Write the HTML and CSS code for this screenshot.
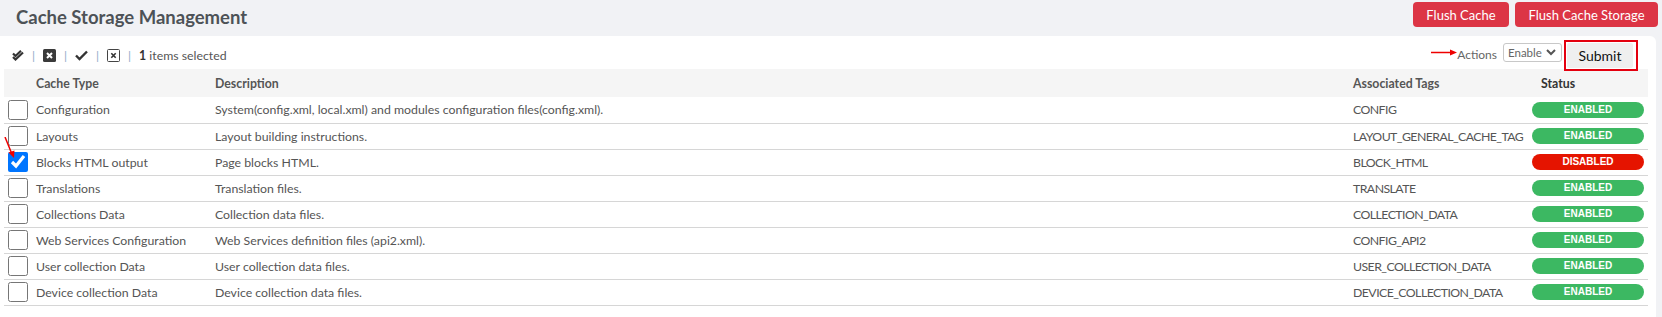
FILE: index.html
```html
<!DOCTYPE html>
<html>
<head>
<meta charset="utf-8">
<link rel="stylesheet" href="styles.css">
</head>
<body>
<div class="page-head">
  <h1 class="title">Cache Storage Management</h1>
  <div class="head-actions">
    <button class="btn-danger">Flush Cache</button>
    <button class="btn-danger">Flush Cache Storage</button>
  </div>
</div>
<div class="card">
  <div class="toolbar">
    <div class="mass">
      <svg class="ic ic-dbl" width="12" height="11" viewBox="0 0 12 11"><path d="M1 3.5 L3.5 6 L9 0.8" fill="none" stroke="#333" stroke-width="2.2"/><path d="M1 7 L3.5 9.5 L11 2.5" fill="none" stroke="#333" stroke-width="2.2"/></svg>
      <span class="sep">|</span>
      <svg class="ic" width="13" height="13" viewBox="0 0 13 13"><rect x="0" y="0" width="13" height="13" rx="1.5" fill="#3a3a3a"/><path d="M4 4 L9 9 M9 4 L4 9" stroke="#fff" stroke-width="2"/></svg>
      <span class="sep">|</span>
      <svg class="ic" width="13" height="11" viewBox="0 0 13 11"><path d="M1 5.5 L4.5 9 L12 1.5" fill="none" stroke="#333" stroke-width="2.4"/></svg>
      <span class="sep">|</span>
      <svg class="ic" width="13" height="13" viewBox="0 0 13 13"><rect x="0.5" y="0.5" width="12" height="12" rx="1" fill="#fff" stroke="#444"/><path d="M4.3 4.3 L8.7 8.7 M8.7 4.3 L4.3 8.7" stroke="#333" stroke-width="1.6"/></svg>
      <span class="sep">|</span>
      <span class="sel-count"><b>1</b> items selected</span>
    </div>
    <div class="act">
      <svg class="arrow-r" width="26" height="7" viewBox="0 0 26 7"><path d="M0 3.5 H21" stroke="#e00" stroke-width="1.5"/><path d="M19 0.5 L26 3.5 L19 6.5 Z" fill="#e00"/></svg>
      <span class="act-label">Actions</span>
      <div class="fake-select"><span>Enable</span><svg width="10" height="7" viewBox="0 0 10 7"><path d="M1 1 L5 5 L9 1" fill="none" stroke="#555" stroke-width="2"/></svg></div>
      <div class="mark"><button class="btn-submit">Submit</button></div>
    </div>
  </div>
  <table class="grid">
    <colgroup>
      <col class="c-check"><col class="c-type"><col class="c-desc"><col class="c-tags"><col class="c-status">
    </colgroup>
    <thead>
      <tr><th></th><th>Cache Type</th><th>Description</th><th>Associated Tags</th><th class="th-status">Status</th></tr>
    </thead>
    <tbody>
      <tr><td class="cb"><input type="checkbox"></td><td>Configuration</td><td>System(config.xml, local.xml) and modules configuration files(config.xml).</td><td class="tag">CONFIG</td><td><span class="badge on">ENABLED</span></td></tr>
      <tr><td class="cb"><input type="checkbox"></td><td>Layouts</td><td>Layout building instructions.</td><td class="tag">LAYOUT_GENERAL_CACHE_TAG</td><td><span class="badge on">ENABLED</span></td></tr>
      <tr><td class="cb"><div class="cb-wrap"><svg class="arrow-d" width="12" height="22" viewBox="0 0 12 22"><path d="M1 0 L7.5 16" stroke="#e00" stroke-width="1.5"/><path d="M4.5 15.5 L10 21 L10.5 13.5 Z" fill="#e00"/></svg><input type="checkbox" checked></div></td><td>Blocks HTML output</td><td>Page blocks HTML.</td><td class="tag">BLOCK_HTML</td><td><span class="badge off">DISABLED</span></td></tr>
      <tr><td class="cb"><input type="checkbox"></td><td>Translations</td><td>Translation files.</td><td class="tag">TRANSLATE</td><td><span class="badge on">ENABLED</span></td></tr>
      <tr><td class="cb"><input type="checkbox"></td><td>Collections Data</td><td>Collection data files.</td><td class="tag">COLLECTION_DATA</td><td><span class="badge on">ENABLED</span></td></tr>
      <tr><td class="cb"><input type="checkbox"></td><td>Web Services Configuration</td><td>Web Services definition files (api2.xml).</td><td class="tag">CONFIG_API2</td><td><span class="badge on">ENABLED</span></td></tr>
      <tr><td class="cb"><input type="checkbox"></td><td>User collection Data</td><td>User collection data files.</td><td class="tag">USER_COLLECTION_DATA</td><td><span class="badge on">ENABLED</span></td></tr>
      <tr><td class="cb"><input type="checkbox"></td><td>Device collection Data</td><td>Device collection data files.</td><td class="tag">DEVICE_COLLECTION_DATA</td><td><span class="badge on">ENABLED</span></td></tr>
    </tbody>
  </table>
</div>
</body>
</html>
```
FILE: styles.css
```css
* { box-sizing: border-box; }
html, body { margin: 0; padding: 0; }
body {
  background: #f1f2f5;
  font-family: Lato, "Liberation Sans", sans-serif;
  color: #555;
  font-size: 12.3px;
}
.page-head {
  height: 36px;
  display: flex;
  justify-content: space-between;
  align-items: flex-start;
  padding: 0 4px 0 16px;
}
.title {
  margin: 0;
  font-size: 18.5px;
  font-weight: 700;
  color: #4d5257;
  line-height: 34px;
}
.head-actions { display: flex; gap: 6px; padding-top: 2px; }
.btn-danger {
  background: #dc3545;
  color: #fff;
  border: 0;
  border-radius: 4px;
  font-family: Lato, "Liberation Sans", sans-serif;
  font-size: 13px;
  height: 25px;
  padding: 0 13.5px;
}
.card {
  background: #fff;
  margin-right: 6px;
  border-radius: 0 6px 0 0;
  padding: 0 8px 20px 4px;
}
.toolbar {
  height: 33px;
  display: flex;
  justify-content: space-between;
  align-items: flex-start;
}
.mass {
  display: flex;
  align-items: center;
  padding: 12px 0 0 8px;
  height: 27px;
}
.ic { display: block; }
.sep { color: #8fa8c8; margin: 0 8px; font-size: 12px; }
.sel-count { color: #555; font-size: 12.3px; }
.sel-count b { color: #333; }
.act { display: flex; align-items: flex-start; padding-top: 4px; margin-right: 10px; }
.arrow-r { margin-top: 9px; }
.act-label { margin-top: 7px; margin-right: 6px; color: #666; font-size: 12px; }
.fake-select {
  margin-top: 3px;
  width: 59px;
  height: 19px;
  border: 1px solid #c8c8c8;
  border-radius: 3px;
  display: flex;
  align-items: center;
  justify-content: space-between;
  padding: 0 5px 0 4px;
  color: #666;
  font-size: 11.5px;
  margin-right: 2px;
}
.mark { border: 2px solid #e4000f; padding: 1px; width: 74px; height: 31px; }
.btn-submit {
  display: block;
  width: 66px;
  height: 25px;
  background: #efefef;
  border: 0;
  border-radius: 2px;
  font-family: Lato, "Liberation Sans", sans-serif;
  font-size: 14px;
  color: #111;
  padding: 0;
}
.grid {
  width: 1644px;
  border-collapse: collapse;
  table-layout: fixed;
}
.c-check { width: 28px; }
.c-type { width: 179px; }
.c-desc { width: 1138px; }
.c-tags { width: 179px; }
.c-status { width: 120px; }
.grid th {
  background: #f5f5f5;
  height: 28px;
  text-align: left;
  font-weight: 700;
  color: #555;
  padding: 0 4px;
  font-size: 12.3px;
}
.grid th.th-status { padding-left: 13px; color: #333; }
.grid td {
  height: 26px;
  border-bottom: 1px solid #d6d6d6;
  padding: 0 4px;
  white-space: nowrap;
}
.grid td.tag { letter-spacing: -0.55px; }
.grid td.cb { padding: 0 0 0 4px; }
.cb input { width: 20px; height: 20px; margin: 0; display: block; }
.cb-wrap { position: relative; }
.arrow-d { position: absolute; left: -4px; top: -15px; }
.badge {
  display: block;
  height: 16px;
  border-radius: 8px;
  color: #fff;
  text-align: center;
  font-family: "Liberation Sans", Arial, sans-serif;
  font-weight: 700;
  font-size: 10px;
  line-height: 16px;
}
.badge.on { background: #3cb862; }
.badge.off { background: #e51400; }
```
